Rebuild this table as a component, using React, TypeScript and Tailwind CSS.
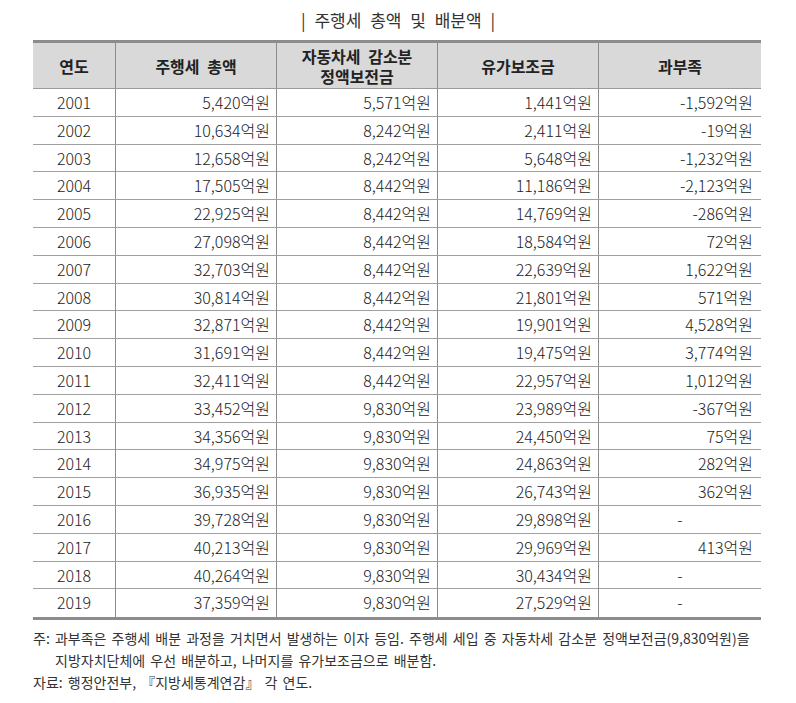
import React from "react";

const rows: [string, string, string, string, string][] = [
  ["2001", "5,420억원", "5,571억원", "1,441억원", "-1,592억원"],
  ["2002", "10,634억원", "8,242억원", "2,411억원", "-19억원"],
  ["2003", "12,658억원", "8,242억원", "5,648억원", "-1,232억원"],
  ["2004", "17,505억원", "8,442억원", "11,186억원", "-2,123억원"],
  ["2005", "22,925억원", "8,442억원", "14,769억원", "-286억원"],
  ["2006", "27,098억원", "8,442억원", "18,584억원", "72억원"],
  ["2007", "32,703억원", "8,442억원", "22,639억원", "1,622억원"],
  ["2008", "30,814억원", "8,442억원", "21,801억원", "571억원"],
  ["2009", "32,871억원", "8,442억원", "19,901억원", "4,528억원"],
  ["2010", "31,691억원", "8,442억원", "19,475억원", "3,774억원"],
  ["2011", "32,411억원", "8,442억원", "22,957억원", "1,012억원"],
  ["2012", "33,452억원", "9,830억원", "23,989억원", "-367억원"],
  ["2013", "34,356억원", "9,830억원", "24,450억원", "75억원"],
  ["2014", "34,975억원", "9,830억원", "24,863억원", "282억원"],
  ["2015", "36,935억원", "9,830억원", "26,743억원", "362억원"],
  ["2016", "39,728억원", "9,830억원", "29,898억원", "-"],
  ["2017", "40,213억원", "9,830억원", "29,969억원", "413억원"],
  ["2018", "40,264억원", "9,830억원", "30,434억원", "-"],
  ["2019", "37,359억원", "9,830억원", "27,529억원", "-"],
];

const font = { fontFamily: '"Noto Sans CJK KR", "Noto Sans", sans-serif' };

export default function App() {
  return (
    <div className="w-[796px] h-[703px] bg-white text-[#222]" style={font}>
      <div className="pt-[7px] h-[40px] text-center text-[17px] leading-[26px] text-[#333] [word-spacing:5px]">
        | 주행세 총액 및 배분액 |
      </div>
      <div className="mx-[33px] w-[728px]">
        <div className="border-t-[3px] border-b-[3px] border-[#8c8c8c]">
          <div className="grid grid-cols-[83px_161px_161px_161px_162px] bg-[#d9d9d9] h-[46px] border-b border-[#9a9a9a] text-[16px] font-bold text-[#222] leading-[20px] [word-spacing:4px]">
            <div className="flex items-center justify-center border-r border-[#8c8c8c]">연도</div>
            <div className="flex items-center justify-center border-r border-[#8c8c8c]">주행세 총액</div>
            <div className="flex items-center justify-center border-r border-[#8c8c8c] text-center">
              <p className="leading-[20px]">
                자동차세 감소분
                <br />
                정액보전금
              </p>
            </div>
            <div className="flex items-center justify-center border-r border-[#8c8c8c]">유가보조금</div>
            <div className="flex items-center justify-center">과부족</div>
          </div>
          {rows.map((r, i) => (
            <div
              key={r[0]}
              className={
                "grid grid-cols-[83px_161px_161px_161px_162px] h-[27.8px] text-[16px] font-light leading-[27px] text-[#222] " +
                (i < rows.length - 1 ? "border-b border-[#a0a0a0]" : "")
              }
            >
              <div className="text-center border-r border-[#8c8c8c]">{r[0]}</div>
              <div className="text-right pr-[6px] border-r border-[#8c8c8c]">{r[1]}</div>
              <div className="text-right pr-[6px] border-r border-[#8c8c8c]">{r[2]}</div>
              <div className="text-right pr-[6px] border-r border-[#8c8c8c]">{r[3]}</div>
              <div className={r[4] === "-" ? "text-center" : "text-right pr-[8px]"}>{r[4]}</div>
            </div>
          ))}
        </div>
        <div className="mt-[7px] text-[14px] leading-[22px] text-[#333] [word-spacing:2px]">
          <div className="h-[22px] whitespace-nowrap">
            주: 과부족은 주행세 배분 과정을 거치면서 발생하는 이자 등임. 주행세 세입 중 자동차세 감소분 정액보전금(9,830억원)을
          </div>
          <div className="h-[22px] pl-[22px]">지방자치단체에 우선 배분하고, 나머지를 유가보조금으로 배분함.</div>
          <div className="h-[22px]">자료: 행정안전부, 『지방세통계연감』 각 연도.</div>
        </div>
      </div>
    </div>
  );
}
